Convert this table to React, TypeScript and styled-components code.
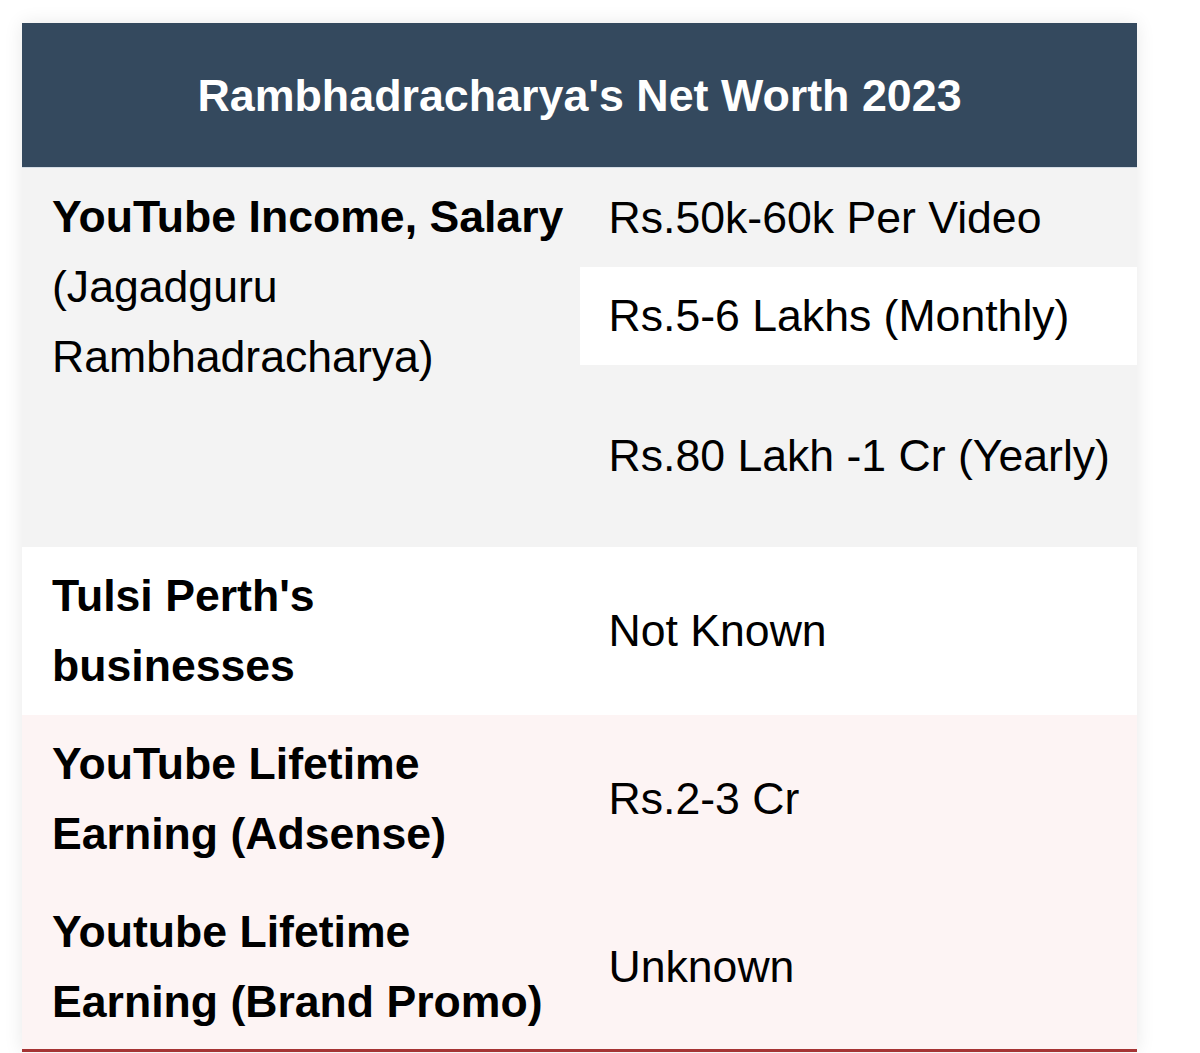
import React from 'react';
import styled, { createGlobalStyle } from 'styled-components';

type Row = {
  label: string;
  value: string;
  tone: 'white' | 'pink';
};

const rows: Row[] = [
  { label: "Tulsi Perth's businesses", value: 'Not Known', tone: 'white' },
  { label: 'YouTube Lifetime Earning (Adsense)', value: 'Rs.2-3 Cr', tone: 'pink' },
  { label: 'Youtube Lifetime Earning (Brand Promo)', value: 'Unknown', tone: 'pink' },
];

const GlobalStyle = createGlobalStyle`
  html, body {
    margin: 0;
    padding: 0;
    background: #ffffff;
    font-family: "Liberation Sans", Arial, sans-serif;
    color: #000000;
  }
`;

const App: React.FC = () => {
  return (
    <Page>
      <GlobalStyle />
      <Table>
        <thead>
          <tr>
            <HeadCell colSpan={2}>Rambhadracharya's Net Worth 2023</HeadCell>
          </tr>
        </thead>
        <tbody>
          <SubRow height={99}>
            <LabelCell rowSpan={3} tone="gray" top>
              <Strong>YouTube Income, Salary</Strong>
              <br />
              (Jagadguru Rambhadracharya)
            </LabelCell>
            <ValueCell tone="gray">Rs.50k-60k Per Video</ValueCell>
          </SubRow>
          <SubRow height={98}>
            <ValueCell tone="white">Rs.5-6 Lakhs (Monthly)</ValueCell>
          </SubRow>
          <SubRow height={182}>
            <ValueCell tone="gray">Rs.80 Lakh -1 Cr (Yearly)</ValueCell>
          </SubRow>
          {rows.map((row, index) => {
            const last = index === rows.length - 1;
            return (
              <SubRow key={index} height={last ? 169 : 168}>
                <LabelCell tone={row.tone} last={last}>
                  <Strong>{row.label}</Strong>
                </LabelCell>
                <ValueCell tone={row.tone} last={last}>
                  {row.value}
                </ValueCell>
              </SubRow>
            );
          })}
        </tbody>
      </Table>
    </Page>
  );
};

const tones = {
  gray: '#f3f3f3',
  white: '#ffffff',
  pink: '#fdf4f4',
};

const Page = styled.div`
  padding: 23px 0 0 22px;
  height: 1053px;
  box-sizing: border-box;
  overflow: hidden;
`;

const Table = styled.table`
  width: 1115px;
  border-collapse: separate;
  border-spacing: 0;
  table-layout: fixed;
  box-shadow: 0 0 18px rgba(0, 0, 0, 0.09);
  font-size: 44.6px;
  line-height: 70px;
`;

const HeadCell = styled.th`
  height: 145px;
  padding: 0;
  background: #34495e;
  color: #ffffff;
  font-size: 44.8px;
  font-weight: bold;
  text-align: center;
  border-bottom: 1px solid #d5dde5;
  box-sizing: border-box;
`;

const SubRow = styled.tr<{ height: number }>`
  height: ${(p) => p.height}px;
`;

const LabelCell = styled.td<{ tone: keyof typeof tones; top?: boolean; last?: boolean }>`
  width: 50%;
  padding: 14px 14px ${(p) => (p.last ? 12 : 14)}px 30px;
  background: ${(p) => tones[p.tone]};
  vertical-align: ${(p) => (p.top ? 'top' : 'middle')};
  text-align: left;
  border-bottom: ${(p) => (p.last ? '3px solid #a53434' : 'none')};
`;

const ValueCell = styled.td<{ tone: keyof typeof tones; last?: boolean }>`
  padding: 14px 20px ${(p) => (p.last ? 12 : 14)}px 29px;
  background: ${(p) => tones[p.tone]};
  vertical-align: middle;
  text-align: left;
  white-space: nowrap;
  border-bottom: ${(p) => (p.last ? '3px solid #a53434' : 'none')};
`;

const Strong = styled.span`
  font-weight: bold;
`;

export default App;
